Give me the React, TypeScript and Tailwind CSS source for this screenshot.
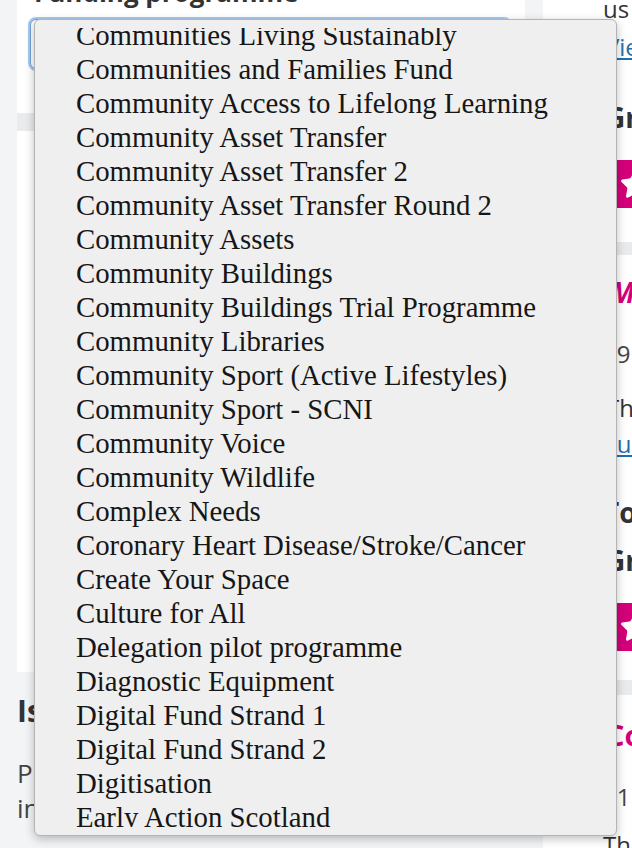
import { Star } from "lucide-react";

const options = [
  "Communities Living Sustainably",
  "Communities and Families Fund",
  "Community Access to Lifelong Learning",
  "Community Asset Transfer",
  "Community Asset Transfer 2",
  "Community Asset Transfer Round 2",
  "Community Assets",
  "Community Buildings",
  "Community Buildings Trial Programme",
  "Community Libraries",
  "Community Sport (Active Lifestyles)",
  "Community Sport - SCNI",
  "Community Voice",
  "Community Wildlife",
  "Complex Needs",
  "Coronary Heart Disease/Stroke/Cancer",
  "Create Your Space",
  "Culture for All",
  "Delegation pilot programme",
  "Diagnostic Equipment",
  "Digital Fund Strand 1",
  "Digital Fund Strand 2",
  "Digitisation",
  "Early Action Scotland",
];

const sans = "font-['Open_Sans',sans-serif]";

function PinkBadge() {
  return (
    <div className="flex h-[48px] w-[60px] items-center bg-[#d4007a] pl-[16px]">
      <Star className="h-[33px] w-[33px] shrink-0 fill-white text-white" strokeWidth={1} />
    </div>
  );
}

export default function App() {
  return (
    <div className={`relative h-[848px] w-[632px] overflow-hidden bg-[#f3f4f6] ${sans}`}>
      <div className="flex">
        {/* left column */}
        <div className="ml-[17px] w-[508px] shrink-0">
          <div className="-mt-[18px] h-[131px] bg-white pl-[13px]">
            <h2 className="whitespace-nowrap pl-[4px] text-[26px] font-bold leading-[20px] text-[#333]">
              Funding programme
            </h2>
            <div className="mt-[17px] h-[50px] w-[480px] rounded-[6px] border border-[#6fa3dc] bg-white shadow-[0_0_0_2px_rgba(111,163,220,0.6)]" />
          </div>
          <div className="h-[18px] bg-[#eaebed]" />
          <div className="h-[541px] bg-white" />
          <h3 className="mt-[22px] whitespace-nowrap text-[30px] font-bold leading-[34px] text-[#333]">
            Is this the right fund for you?
          </h3>
          <p className="mt-[28px] text-[26px] leading-[35px] text-[#444]">
            <span className="block whitespace-nowrap">Please read our guidance notes</span>
            <span className="block whitespace-nowrap">in full before you apply.</span>
          </p>
        </div>

        {/* right column */}
        <div className="ml-[18px] w-[200px] shrink-0">
          <div className="-mt-[6px] h-[248px] bg-white pl-[60px]">
            <p className="whitespace-nowrap text-[24px] leading-[30px] text-[#333]">us</p>
            <a className="mt-[8px] block whitespace-nowrap pl-[2px] text-[24px] leading-[30px] text-[#1f6fae] underline underline-offset-2">
              View details
            </a>
            <p className="mt-[38px] whitespace-nowrap pl-[2px] text-[28px] font-bold leading-[34px] text-[#333]">
              Grant size
            </p>
            <div className="mt-[26px]">
              <PinkBadge />
            </div>
          </div>
          <div className="h-[13px] bg-[#eaebed]" />
          <div className="h-[425px] bg-white pl-[60px]">
            <p className="whitespace-nowrap pt-[20px] text-[28px] font-bold italic leading-[34px] text-[#d4007a]">
              &nbsp;Main
            </p>
            <p className="mt-[30px] whitespace-nowrap text-[24px] leading-[30px] text-[#444]">19 May</p>
            <p className="mt-[24px] whitespace-nowrap pl-[3px] text-[24px] leading-[30px] text-[#333]">The</p>
            <a className="mt-[6px] block whitespace-nowrap text-[24px] leading-[30px] text-[#1f6fae] underline underline-offset-2">
              £us
            </a>
            <p className="mt-[36px] whitespace-nowrap text-[28px] font-bold leading-[34px] text-[#333]">To</p>
            <p className="mt-[14px] whitespace-nowrap pl-[2px] text-[28px] font-bold leading-[34px] text-[#333]">Grant</p>
            <div className="mt-[26px]">
              <PinkBadge />
            </div>
          </div>
          <div className="h-[15px] bg-[#eaebed]" />
          <div className="h-[200px] bg-white pl-[60px]">
            <p className="whitespace-nowrap pl-[3px] pt-[23px] text-[29px] font-bold leading-[34px] text-[#d4007a]">Co</p>
            <p className="mt-[30px] whitespace-nowrap text-[24px] leading-[30px] text-[#444]">£1</p>
            <p className="mt-[18px] whitespace-nowrap text-[24px] leading-[30px] text-[#333]">The</p>
          </div>
        </div>
      </div>

      {/* open native-style select menu */}
      <div className="absolute left-[34px] top-[19px] h-[817px] w-[583px] rounded-[6px] border border-[#b4b4b4] bg-[#efefef] pb-[8px] pt-[8px] shadow-[0_3px_10px_rgba(0,0,0,0.25)]">
        <div className="h-full overflow-hidden">
          <ul className="-mt-[10px] font-['Liberation_Serif',serif] text-[28.8px] leading-[34px] text-[#161616]">
            {options.map((o) => (
              <li key={o} className="whitespace-nowrap pl-[41px]">
                {o}
              </li>
            ))}
          </ul>
        </div>
      </div>
    </div>
  );
}
